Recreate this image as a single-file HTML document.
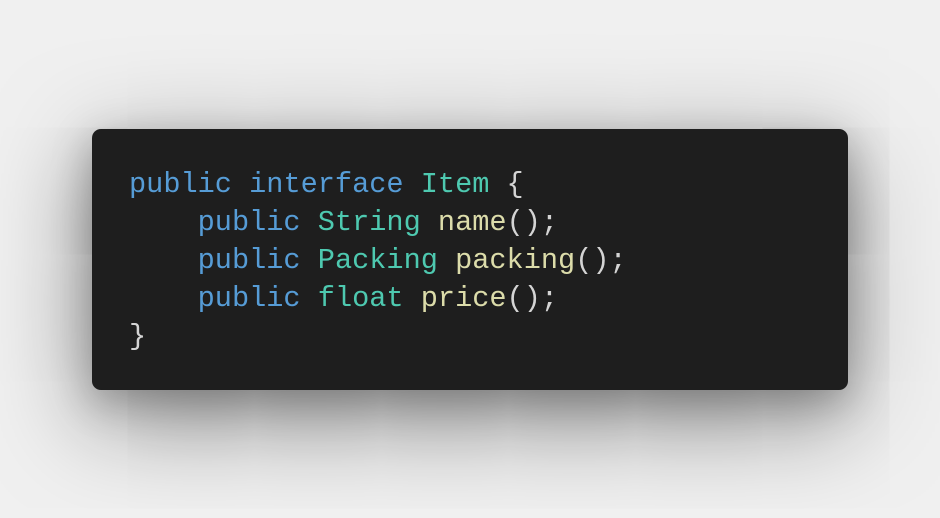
<!DOCTYPE html>
<html><head><meta charset="utf-8"><style>
html,body{margin:0;padding:0;width:940px;height:518px;background:#f0f0f0;overflow:hidden}
.card{position:absolute;left:92px;top:129px;width:756px;height:261px;background:#1e1e1e;border-radius:9px;
box-shadow:0 25px 100px rgba(0,0,0,0.5),0 10px 40px rgba(0,0,0,0.25)}
pre{position:absolute;left:129px;top:166px;margin:0;font-family:"Liberation Mono",monospace;font-size:28.6px;line-height:38px;color:#d4d4d4;white-space:pre;font-weight:300}
.k{color:#569cd6}.t{color:#4ec9b0}.f{color:#dcdcaa}
</style></head><body>
<div class="card"></div>
<pre><span class="k">public</span> <span class="k">interface</span> <span class="t">Item</span> {
    <span class="k">public</span> <span class="t">String</span> <span class="f">name</span>();
    <span class="k">public</span> <span class="t">Packing</span> <span class="f">packing</span>();
    <span class="k">public</span> <span class="t">float</span> <span class="f">price</span>();
}</pre>
</body></html>
